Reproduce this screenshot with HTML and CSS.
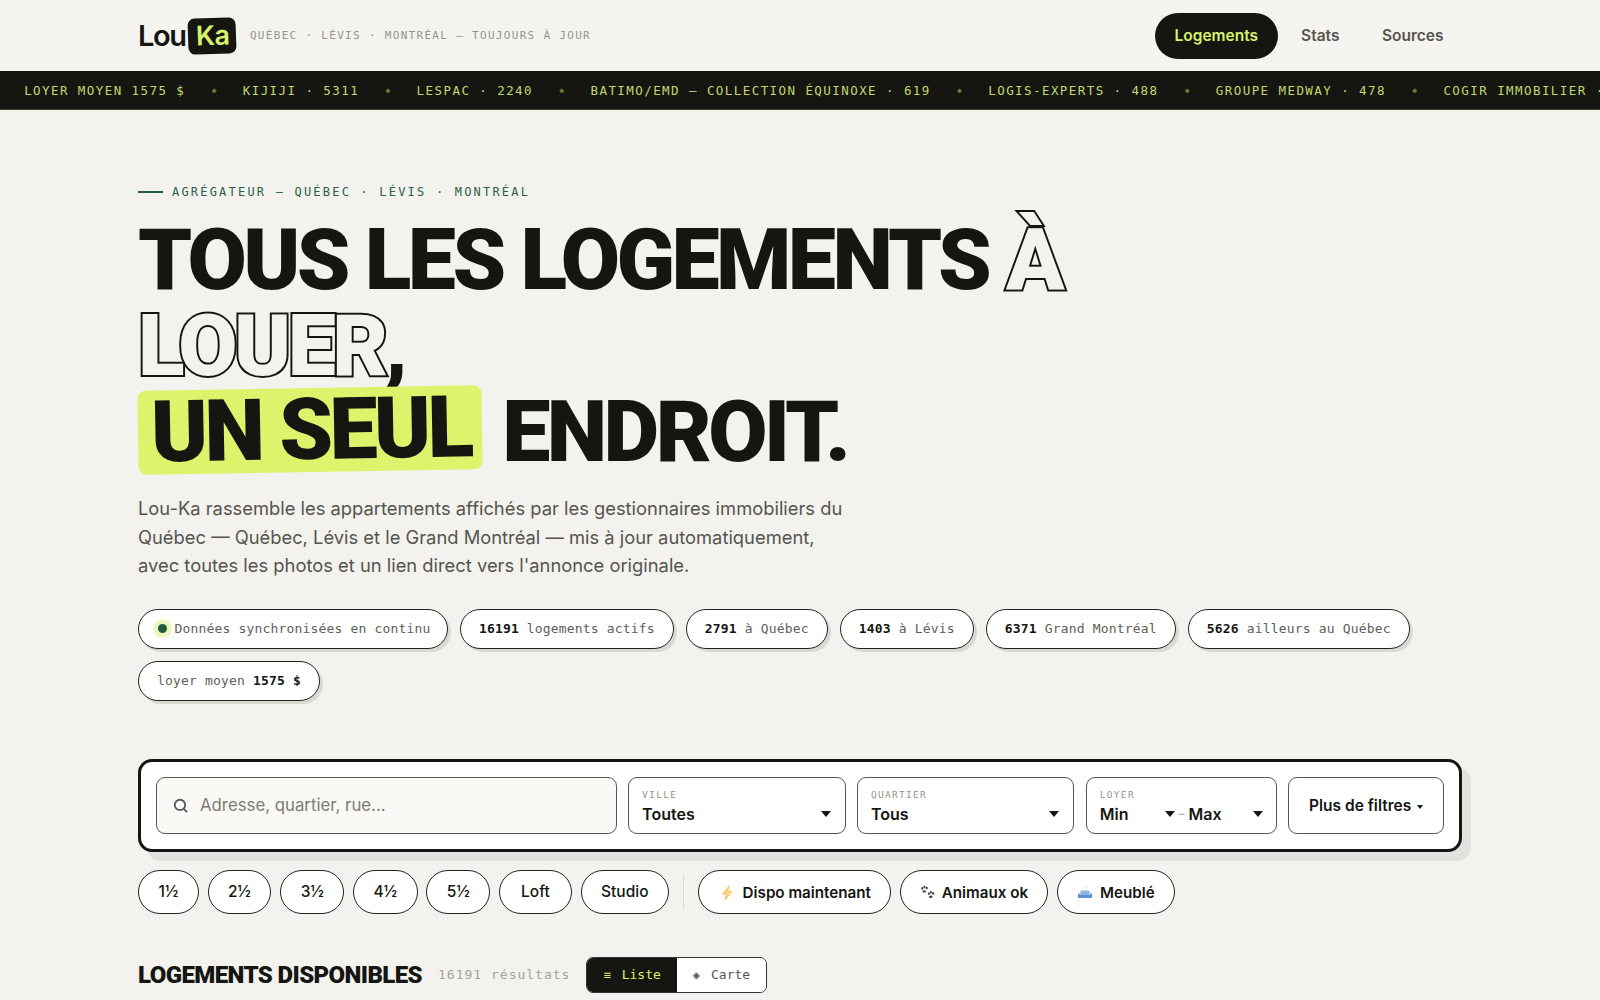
FILE: index.html
```html
<!DOCTYPE html>
<html lang="fr">
<head>
    <meta charset="UTF-8">
    <meta name="viewport" content="width=device-width, initial-scale=1.0">
    <title>Lou-Ka</title>
    <link rel="stylesheet" href="styles.css">
</head>
<body>
    <header class="top-bar">
        <div class="brand">
            <div class="logo">Lou<span class="logo-badge">Ka</span></div>
            <span class="tagline">QUÉBEC · LÉVIS · MONTRÉAL — TOUJOURS À JOUR</span>
        </div>
        <nav class="main-nav">
            <a href="#" class="nav-link active">Logements</a>
            <a href="#" class="nav-link">Stats</a>
            <a href="#" class="nav-link">Sources</a>
        </nav>
    </header>

    <div class="ticker">
        <div class="ticker-track">
            <span class="ticker-sep">◆</span>
            <span>LOYER MOYEN 1575 $</span>
            <span class="ticker-sep">◆</span>
            <span>KIJIJI · 5311</span>
            <span class="ticker-sep">◆</span>
            <span>LESPAC · 2240</span>
            <span class="ticker-sep">◆</span>
            <span>BATIMO/EMD — COLLECTION ÉQUINOXE · 619</span>
            <span class="ticker-sep">◆</span>
            <span>LOGIS-EXPERTS · 488</span>
            <span class="ticker-sep">◆</span>
            <span>GROUPE MEDWAY · 478</span>
            <span class="ticker-sep">◆</span>
            <span>COGIR IMMOBILIER · 412</span>
        </div>
    </div>

    <main class="page">
        <!-- Hero -->
        <section class="hero">
            <div class="eyebrow"><span class="eyebrow-line"></span>AGRÉGATEUR — QUÉBEC · LÉVIS · MONTRÉAL</div>
            <h1>TOUS LES LOGEMENTS <span class="outline">À LOUER</span>,<br><span class="highlight">UN SEUL</span> ENDROIT.</h1>
            <p class="lead">Lou-Ka rassemble les appartements affichés par les gestionnaires immobiliers du Québec — Québec, Lévis et le Grand Montréal — mis à jour automatiquement, avec toutes les photos et un lien direct vers l'annonce originale.</p>
            <div class="chips">
                <div class="chip chip-live"><span class="live-dot"></span>Données synchronisées en continu</div>
                <div class="chip"><b>16191</b> logements actifs</div>
                <div class="chip"><b>2791</b> à Québec</div>
                <div class="chip"><b>1403</b> à Lévis</div>
                <div class="chip"><b>6371</b> Grand Montréal</div>
                <div class="chip"><b>5626</b> ailleurs au Québec</div>
                <div class="chip">loyer moyen <b>1575 $</b></div>
            </div>
        </section>

        <!-- Recherche -->
        <section class="search-box">
            <div class="search-input">
                <svg class="search-icon" width="17" height="17" viewBox="0 0 16 16" fill="none" stroke="#555" stroke-width="1.7" stroke-linecap="round"><circle cx="7.5" cy="7.5" r="4.9"/><path d="M11.2 11.2l2.5 2.5"/></svg>
                <span>Adresse, quartier, rue...</span>
            </div>
            <div class="field field-ville">
                <span class="field-label">VILLE</span>
                <div class="field-value"><span>Toutes</span><i class="caret"></i></div>
            </div>
            <div class="field field-quartier">
                <span class="field-label">QUARTIER</span>
                <div class="field-value"><span>Tous</span><i class="caret"></i></div>
            </div>
            <div class="field field-loyer">
                <span class="field-label">LOYER</span>
                <div class="field-value">
                    <div class="range-part"><span>Min</span><i class="caret"></i></div>
                    <span class="range-dash">–</span>
                    <div class="range-part"><span>Max</span><i class="caret"></i></div>
                </div>
            </div>
            <button class="more-filters">Plus de filtres <i class="caret-small"></i></button>
        </section>

        <!-- Filtres rapides -->
        <div class="pills">
            <button class="pill size-pill">1½</button>
            <button class="pill size-pill">2½</button>
            <button class="pill size-pill">3½</button>
            <button class="pill size-pill">4½</button>
            <button class="pill size-pill">5½</button>
            <button class="pill size-pill pill-wide">Loft</button>
            <button class="pill size-pill">Studio</button>
            <span class="pill-divider"></span>
            <button class="pill tag-pill">
                <svg width="18" height="18" viewBox="0 0 18 18"><path d="M11 2L4.5 10.2h4L7 16l7-8.4H9.8z" fill="#ffd983" stroke="#f6b73c" stroke-width=".8" stroke-linejoin="round"/></svg>
                Dispo maintenant
            </button>
            <button class="pill tag-pill">
                <svg width="15" height="15" viewBox="0 0 17 16" fill="#444"><ellipse cx="2.6" cy="3.4" rx="1.2" ry="1.5"/><ellipse cx="5" cy="1.8" rx="1.2" ry="1.5"/><ellipse cx="7.6" cy="3" rx="1.2" ry="1.5"/><path d="M2.8 6.4c.8-1.4 3.2-1.4 4 0 .5 1-.5 1.7-2 1.7s-2.5-.7-2-1.7z"/><ellipse cx="10" cy="9.4" rx="1.2" ry="1.5"/><ellipse cx="12.4" cy="7.8" rx="1.2" ry="1.5"/><ellipse cx="15" cy="9" rx="1.2" ry="1.5"/><path d="M10.2 12.4c.8-1.4 3.2-1.4 4 0 .5 1-.5 1.7-2 1.7s-2.5-.7-2-1.7z"/></svg>
                Animaux ok
            </button>
            <button class="pill tag-pill">
                <svg width="16" height="16" viewBox="0 0 17 16"><path d="M3.5 7c0-1 .8-1.7 1.7-1.7h6.6c.9 0 1.7.7 1.7 1.7v3h-10z" fill="#8db4e4"/><path d="M1 8.8c0-.8 1.9-.8 1.9 0V10h11.2V8.8c0-.8 1.9-.8 1.9 0v4.4H1z" fill="#5f92d4"/><circle cx="9.5" cy="2" r="1.2" fill="#f8e9a8"/></svg>
                Meublé
            </button>
        </div>

        <div class="results-head">
            <h2>LOGEMENTS DISPONIBLES</h2>
            <span class="results-count">16191 résultats</span>
            <div class="view-toggle">
                <button class="view-btn active"><span class="view-icon">≡</span>Liste</button>
                <button class="view-btn"><span class="view-icon">◈</span>Carte</button>
            </div>
        </div>
    </main>
</body>
</html>
```

FILE: styles.css
```css
* {
    box-sizing: border-box;
}
html, body {
    overflow-x: hidden;
}
body {
    margin: 0;
    background-color: #f3f2ee;
    color: #151612;
    font-family: Inter, "Noto Sans", sans-serif;
}
button {
    font-family: inherit;
    cursor: pointer;
}

/* Header */
.top-bar {
    display: flex;
    justify-content: space-between;
    align-items: center;
    height: 71px;
    padding: 0 137px 0 138px;
    background-color: #f5f3ef;
}
.brand {
    display: flex;
    align-items: center;
    gap: 14px;
}
.logo {
    display: flex;
    align-items: center;
    font-size: 29px;
    font-weight: 600;
    letter-spacing: -1.4px;
}
.logo-badge {
    margin-left: 2px;
    padding: 1px 7px 2px 8px;
    background-color: #151612;
    color: #d9f26b;
    font-size: 27px;
    border-radius: 7px;
    letter-spacing: -0.6px;
    transform: rotate(-2deg);
}
.tagline {
    font-family: "DejaVu Sans Mono", monospace;
    font-size: 11px;
    letter-spacing: 1.31px;
    color: #94938e;
}
.main-nav {
    display: flex;
    gap: 3.5px;
}
.nav-link {
    padding: 13px 19.5px;
    font-size: 15.5px;
    font-weight: 600;
    line-height: 20px;
    color: #55554f;
    text-decoration: none;
    border-radius: 24px;
}
.nav-link.active {
    padding: 13px 20px;
    background-color: #151612;
    color: #d9f26b;
}

/* Bandeau */
.ticker {
    height: 39px;
    overflow: hidden;
    background-color: #151612;
    border-bottom: 1px solid #3d4425;
}
.ticker-track {
    display: flex;
    align-items: center;
    width: max-content;
    height: 38px;
    margin-left: -7px;
    font-family: "DejaVu Sans Mono", monospace;
    font-size: 12.5px;
    letter-spacing: 1.43px;
    color: #c3d66f;
    white-space: nowrap;
}
.ticker-sep {
    padding: 0 26.3px;
    font-size: 8px;
    letter-spacing: 0;
    color: #727c3c;
}
.ticker-sep:first-child {
    padding-left: 0;
}

.page {
    padding: 0 138px;
}

/* Hero */
.hero {
    padding-top: 74px;
}
.eyebrow {
    display: flex;
    align-items: center;
    gap: 9px;
    height: 16px;
    font-family: "DejaVu Sans Mono", monospace;
    font-size: 12px;
    letter-spacing: 2.2px;
    color: #2b5f47;
}
.eyebrow-line {
    width: 25px;
    height: 2.5px;
    background-color: #1f5c42;
}
h1 {
    margin: 17px 0 0;
    max-width: 1100px;
    font-family: Roboto, Inter, sans-serif;
    font-size: 86px;
    font-weight: 900;
    line-height: 86px;
    letter-spacing: -3.6px;
}
/* stroke painted under the fill so the glyph overlaps of the font stay hidden */
.outline {
    color: #f3f2ee;
    -webkit-text-stroke: 4px #151612;
    paint-order: stroke fill;
}
.highlight {
    display: inline-block;
    margin-right: 2px;
    padding: 0 12px 0 13px;
    background-color: #dcf36c;
    border-radius: 8px;
    line-height: 84px;
    transform: translateY(-2px) rotate(-1deg);
}
.lead {
    width: 710px;
    margin: 19px 0 0;
    font-size: 18.35px;
    line-height: 28.5px;
    color: #55554f;
}
.chips {
    display: flex;
    flex-wrap: wrap;
    gap: 12px 11.8px;
    margin-top: 29px;
}
.chip {
    height: 40px;
    padding: 0 18.1px;
    background-color: #fff;
    border: 1.5px solid #222;
    border-radius: 20px;
    box-shadow: 3px 3px 0 #d9d9d4;
    font-family: "DejaVu Sans Mono", monospace;
    font-size: 13px;
    line-height: 37px;
    letter-spacing: 0.17px;
    color: #5e5e58;
    white-space: nowrap;
}
.chip b {
    color: #151612;
}
.chip-live {
    padding: 0 16.6px 0 18.5px;
}
.live-dot {
    display: inline-block;
    width: 9px;
    height: 9px;
    margin: 0 8px 0 0;
    background-color: #1f5c42;
    border-radius: 50%;
    box-shadow: 0 0 0 5px #ecf7bd;
}

/* Recherche */
.search-box {
    display: flex;
    gap: 11.4px;
    height: 93px;
    margin-top: 58px;
    padding: 15px;
    background-color: #fff;
    border: 3px solid #151612;
    border-radius: 14px;
    box-shadow: 9px 9px 0 #e1e1dd;
}
.search-input {
    display: flex;
    align-items: center;
    gap: 11px;
    width: 461px;
    padding-left: 15px;
    background-color: #faf9f5;
    border: 1.5px solid #555;
    border-radius: 9px;
    font-size: 16.8px;
    color: #7c7c76;
}
.field {
    display: flex;
    flex-direction: column;
    justify-content: center;
    gap: 4px;
    padding: 2px 14px 0 13px;
    border: 1.5px solid #555;
    border-radius: 9px;
}
.field-ville, .field-quartier {
    width: 217.6px;
}
.field-loyer {
    width: 191px;
    padding-right: 12.5px;
}
.field-label {
    font-family: "DejaVu Sans Mono", monospace;
    font-size: 9.5px;
    letter-spacing: 1.3px;
    color: #95958f;
}
.field-value {
    display: flex;
    justify-content: space-between;
    align-items: center;
    font-size: 16px;
    font-weight: 600;
}
.range-part {
    display: flex;
    flex: 1;
    justify-content: space-between;
    align-items: center;
}
.range-dash {
    margin: 0 4px;
    color: #b5b5af;
    font-size: 12px;
}
.caret {
    width: 0;
    height: 0;
    border-left: 5.5px solid transparent;
    border-right: 5.5px solid transparent;
    border-top: 6px solid #151612;
}
.caret-small {
    display: inline-block;
    width: 0;
    height: 0;
    margin-left: 2px;
    vertical-align: 2px;
    border-left: 3px solid transparent;
    border-right: 3px solid transparent;
    border-top: 4px solid #151612;
}
.more-filters {
    width: 156px;
    background-color: #fff;
    border: 1.5px solid #555;
    border-radius: 9px;
    font-size: 15.5px;
    font-weight: 600;
    color: #151612;
}

/* Filtres rapides */
.pills {
    display: flex;
    align-items: center;
    gap: 8.8px;
    margin-top: 18px;
}
.pill {
    display: flex;
    align-items: center;
    justify-content: center;
    height: 44px;
    background-color: #fff;
    border: 1.5px solid #222;
    border-radius: 22px;
    font-weight: 500;
    color: #151612;
}
.size-pill {
    padding: 0 19.5px;
    font-size: 15.5px;
}
.pill-wide {
    padding: 0 21px;
}
.tag-pill {
    gap: 7px;
    padding: 2px 19px 0;
    font-size: 15.2px;
    font-weight: 600;
}
.pill-divider {
    width: 1px;
    height: 36px;
    margin: 0 5px;
    background-color: #dcdcd7;
}

/* Résultats */
.results-head {
    display: flex;
    align-items: center;
    margin-top: 43px;
}
h2 {
    margin: 0;
    font-family: Roboto, Inter, sans-serif;
    font-size: 24px;
    font-weight: 900;
    letter-spacing: -0.6px;
}
.results-count {
    margin-left: 16px;
    font-family: "DejaVu Sans Mono", monospace;
    font-size: 13px;
    letter-spacing: 1px;
    color: #a3a39d;
}
.view-toggle {
    display: flex;
    margin-left: 16px;
    height: 36px;
    overflow: hidden;
    border: 1.5px solid #333;
    border-radius: 7px;
}
.view-btn {
    display: flex;
    align-items: center;
    gap: 11px;
    padding: 0 16px;
    background-color: #fff;
    border: none;
    font-family: "DejaVu Sans Mono", monospace;
    font-size: 13px;
    color: #55554f;
}
.view-btn.active {
    background-color: #151612;
    color: #d9f26b;
}
.view-icon {
    font-size: 12px;
}
```
